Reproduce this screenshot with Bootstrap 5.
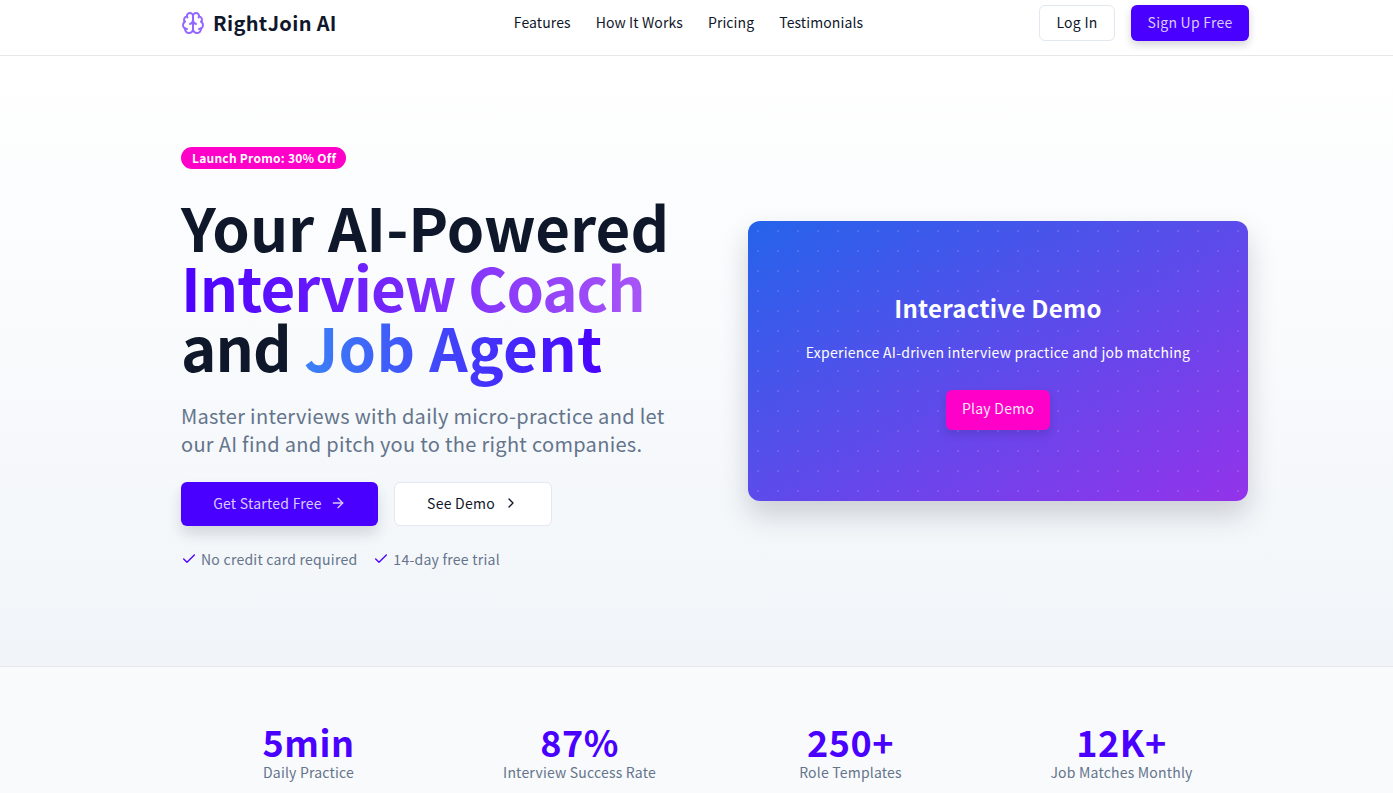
<!DOCTYPE html>
<html lang="en">
<head>
    <meta charset="UTF-8">
    <title>RightJoin AI</title>
    <link rel="stylesheet" href="https://cdn.jsdelivr.net/npm/bootstrap@5.3.3/dist/css/bootstrap.min.css">
    <style>
        body { font-family: "Noto Sans CJK SC", "Noto Sans", sans-serif; color: #0f172a; background: #fff; overflow: hidden; letter-spacing: .25px; }
        .page-wrap { width: 1100px; margin-left: 165px; padding: 0 16px; }
        .top-bar { height: 56px; border-bottom: 1px solid #e5e7eb; background: #fff; padding-top: 5px; }
        .brand-name { font-size: 20px; font-weight: 700; color: #0f172a; line-height: 1; letter-spacing: .35px; }
        .top-link { font-size: 14px; color: #0f172a; text-decoration: none; padding-bottom: 2px; letter-spacing: .1px; }
        .top-links { margin-left: 177px; gap: 25px; }
        .btn-login { width: 76px; height: 36px; font-size: 14px; padding: 0 0 2px; background: #fff; border: 1px solid #e2e8f0; color: #0f172a; border-radius: 6px; letter-spacing: .25px; }
        .btn-signup { width: 118px; height: 36px; font-size: 14px; padding: 0 0 2px; background: #4a00ff; border: 0; color: #d9ccff; border-radius: 6px; box-shadow: 0 4px 8px rgba(15,23,42,.18); letter-spacing: .25px; }
        .hero-area { height: 611px; background: linear-gradient(180deg, #fff 0%, #f1f5f9 100%); border-bottom: 1px solid #e5e7eb; padding-top: 91px; }
        .promo-pill { display: inline-block; height: 22px; line-height: 22px; padding: 0 10px 0 11px; border-radius: 11px; background: #ff00c8; color: #fff; font-size: 12px; font-weight: 700; vertical-align: top; }
        .hero-title { font-size: 60px; line-height: 60px; font-weight: 700; margin: 25px 0 0; letter-spacing: 0; color: #0f172a; }
        .title-and { letter-spacing: -1px; }
        .grad-a { background: linear-gradient(90deg, #4a00ff, #a855f7); -webkit-background-clip: text; background-clip: text; color: transparent; letter-spacing: -1px; }
        .grad-b { background: linear-gradient(90deg, #3b82f6, #4a00ff); -webkit-background-clip: text; background-clip: text; color: transparent; letter-spacing: .3px; }
        .hero-sub { font-size: 20px; line-height: 28px; color: #64748b; margin: 26px 0 0; width: 500px; letter-spacing: .3px; }
        .hero-btns { margin-top: 24px; gap: 16px; }
        .btn-start { width: 197px; height: 44px; padding: 0 0 2px; font-size: 14px; background: #4a00ff; border: 0; color: #d9ccff; border-radius: 6px; box-shadow: 0 8px 14px rgba(15,23,42,.14); letter-spacing: .25px; }
        .btn-demo { width: 158px; height: 44px; padding: 0 0 2px; font-size: 14px; background: #fff; border: 1px solid #e2e8f0; color: #0f172a; border-radius: 6px; letter-spacing: .25px; }
        .check-row { margin-top: 22px; font-size: 14px; color: #64748b; gap: 16px; line-height: 22px; }
        .hero-left { width: 567px; }
        .demo-box { width: 500px; height: 280px; margin-top: 74px; margin-right: 1px; border-radius: 12px; color: #fff; text-align: center; padding-top: 69px;
            background: radial-gradient(circle at 10px 10px, rgba(255,255,255,.13) 1.4px, transparent 1.5px) 0 0 / 20px 20px, linear-gradient(to bottom right, #2563eb, #9333ea);
            box-shadow: 0 14px 28px rgba(15,23,42,.18); }
        .demo-title { font-size: 24px; line-height: 36px; font-weight: 700; margin: 0; letter-spacing: .3px; }
        .demo-sub { font-size: 14px; line-height: 20px; margin: 16px 0 0; }
        .btn-play { width: 104px; height: 40px; padding: 0 0 3px; margin-top: 28px; font-size: 14px; background: #ff00c8; border: 0; color: #fde7f9; border-radius: 6px; box-shadow: 0 4px 8px rgba(15,23,42,.14); letter-spacing: .25px; }
        .stats-area { background: #f8fafc; height: 126px; padding-top: 53px; }
        .stats-grid { display: grid; grid-template-columns: repeat(4, 271px); margin-left: -8px; text-align: center; }
        .stat-num { font-size: 36px; line-height: 42px; font-weight: 700; color: #4a00ff; letter-spacing: .5px; }
        .stat-label { font-size: 14px; line-height: 20px; color: #64748b; letter-spacing: .2px; }
    </style>
</head>
<body>
    <!-- top nav -->
    <nav class="top-bar">
      <div class="page-wrap d-flex align-items-center">
        <a href="#" class="d-flex align-items-center gap-2 text-decoration-none">
          <svg width="24" height="24" viewBox="0 0 24 24" fill="none" stroke="#9466ff" stroke-width="2" stroke-linecap="round" stroke-linejoin="round">
            <path d="M12 5a3 3 0 1 0-5.997.125 4 4 0 0 0-2.526 5.77 4 4 0 0 0 .556 6.588A4 4 0 1 0 12 18Z"/>
            <path d="M12 5a3 3 0 1 1 5.997.125 4 4 0 0 1 2.526 5.77 4 4 0 0 1-.556 6.588A4 4 0 1 1 12 18Z"/>
            <path d="M15 13a4.5 4.5 0 0 1-3-4 4.5 4.5 0 0 1-3 4"/>
            <path d="M17.599 6.5a3 3 0 0 0 .399-1.375"/>
            <path d="M6.003 5.125A3 3 0 0 0 6.401 6.5"/>
            <path d="M3.477 10.896a4 4 0 0 1 .585-.396"/>
            <path d="M19.938 10.5a4 4 0 0 1 .585.396"/>
            <path d="M6 18a4 4 0 0 1-1.967-.516"/>
            <path d="M19.967 17.484A4 4 0 0 1 18 18"/>
          </svg>
          <span class="brand-name">RightJoin AI</span>
        </a>
        <div class="d-flex top-links">
          <a class="top-link" href="#">Features</a>
          <a class="top-link" href="#">How It Works</a>
          <a class="top-link" href="#">Pricing</a>
          <a class="top-link" href="#">Testimonials</a>
        </div>
        <div class="d-flex ms-auto gap-3">
          <button class="btn btn-login">Log In</button>
          <button class="btn btn-signup">Sign Up Free</button>
        </div>
      </div>
    </nav>

    <!-- hero -->
    <section class="hero-area">
      <div class="page-wrap d-flex justify-content-between">
        <div class="hero-left">
          <span class="promo-pill">Launch Promo: 30% Off</span>
          <h1 class="hero-title">Your AI-Powered<br><span class="grad-a">Interview Coach</span><br><span class="title-and">and</span> <span class="grad-b">Job Agent</span></h1>
          <p class="hero-sub">Master interviews with daily micro-practice and let our AI find and pitch you to the right companies.</p>
          <div class="d-flex hero-btns">
            <button class="btn btn-start d-flex align-items-center justify-content-center gap-2">Get Started Free
              <svg width="16" height="16" viewBox="0 0 24 24" fill="none" stroke="#d9ccff" stroke-width="2" stroke-linecap="round" stroke-linejoin="round"><path d="M5 12h14"/><path d="m12 5 7 7-7 7"/></svg>
            </button>
            <button class="btn btn-demo d-flex align-items-center justify-content-center gap-2">See Demo
              <svg width="16" height="16" viewBox="0 0 24 24" fill="none" stroke="#0f172a" stroke-width="2" stroke-linecap="round" stroke-linejoin="round"><path d="m9 18 6-6-6-6"/></svg>
            </button>
          </div>
          <div class="d-flex check-row">
            <span class="d-flex align-items-center gap-1">
              <svg width="16" height="16" viewBox="0 0 24 24" fill="none" stroke="#4a00ff" stroke-width="2" stroke-linecap="round" stroke-linejoin="round"><path d="M20 6 9 17l-5-5"/></svg>
              No credit card required</span>
            <span class="d-flex align-items-center gap-1">
              <svg width="16" height="16" viewBox="0 0 24 24" fill="none" stroke="#4a00ff" stroke-width="2" stroke-linecap="round" stroke-linejoin="round"><path d="M20 6 9 17l-5-5"/></svg>
              14-day free trial</span>
          </div>
        </div>
        <div class="demo-box">
          <h3 class="demo-title">Interactive Demo</h3>
          <p class="demo-sub">Experience AI-driven interview practice and job matching</p>
          <button class="btn btn-play">Play Demo</button>
        </div>
      </div>
    </section>

    <!-- stats -->
    <section class="stats-area">
      <div class="page-wrap">
        <div class="stats-grid">
          <div><div class="stat-num">5min</div><div class="stat-label">Daily Practice</div></div>
          <div><div class="stat-num">87%</div><div class="stat-label">Interview Success Rate</div></div>
          <div><div class="stat-num">250+</div><div class="stat-label">Role Templates</div></div>
          <div><div class="stat-num">12K+</div><div class="stat-label">Job Matches Monthly</div></div>
        </div>
      </div>
    </section>

    <script src="https://cdn.jsdelivr.net/npm/bootstrap@5.3.3/dist/js/bootstrap.bundle.min.js"></script>
</body>
</html>
